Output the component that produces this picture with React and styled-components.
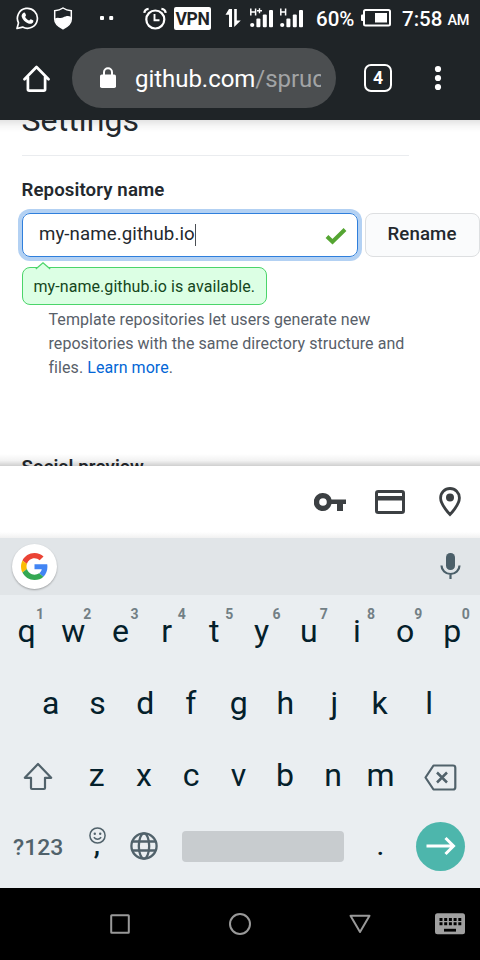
import React from "react";
import styled, { createGlobalStyle } from "styled-components";

const Global = createGlobalStyle`
  * { box-sizing: border-box; }
  html, body { margin: 0; padding: 0; background: #000; }
  body { font-family: Roboto, "Noto Sans", sans-serif; overflow: hidden; }
`;

const Screen = styled.div`
  width: 480px;
  height: 960px;
  display: flex;
  flex-direction: column;
  overflow: hidden;
  background: #fff;
`;

const Icon = styled.svg`
  display: block;
  flex: none;
  width: ${(p) => p.$w}px;
  height: ${(p) => p.$h}px;
  margin-left: ${(p) => p.$ml || 0}px;
  margin-right: ${(p) => p.$mr || 0}px;
  margin-top: ${(p) => p.$mt || 0}px;
`;

/* ---------- Status bar ---------- */
const StatusBar = styled.div`
  height: 36px;
  flex: none;
  display: flex;
  align-items: flex-start;
  background: #1f2427;
  color: #fff;
`;
const StatusText = styled.span`
  flex: none;
  white-space: nowrap;
  font-size: ${(p) => p.$size}px;
  font-weight: 500;
  line-height: 24px;
  letter-spacing: ${(p) => p.$ls || 0}px;
  margin-top: ${(p) => p.$mt}px;
  margin-left: ${(p) => p.$ml}px;
  width: ${(p) => p.$w}px;
`;
const VpnBadge = styled.span`
  flex: none;
  width: 37px;
  height: 23px;
  margin: 7px 0 0 7px;
  border-radius: 2px;
  background: #fff;
  color: #1f2427;
  font-size: 17.5px;
  font-weight: 700;
  line-height: 25px;
  letter-spacing: -0.3px;
  text-align: center;
`;

/* ---------- Browser toolbar ---------- */
const Toolbar = styled.div`
  height: 84px;
  flex: none;
  display: flex;
  align-items: flex-start;
  background: #1f2427;
`;
const AddressPill = styled.div`
  flex: none;
  width: 264px;
  height: 60px;
  margin: 12px 0 0 21px;
  padding-left: 28px;
  border-radius: 30px;
  display: flex;
  align-items: flex-start;
  background: #4b4e50;
`;
const Url = styled.div`
  width: 186px;
  margin: 0 0 0 19px;
  overflow: hidden;
  white-space: nowrap;
  color: #fff;
  font-size: 24px;
  line-height: 63px;
  letter-spacing: -0.04px;
`;
const UrlPath = styled.span`
  color: #a2a4a5;
`;
const TabCount = styled.div`
  flex: none;
  width: 28px;
  height: 28px;
  margin: 28px 0 0 28px;
  border: 2.6px solid #fff;
  border-radius: 7px;
  color: #fff;
  font-size: 17.5px;
  font-weight: 700;
  line-height: 24px;
  text-align: center;
`;

/* ---------- Page ---------- */
const Page = styled.main`
  position: relative;
  flex: none;
  height: 346px;
  padding-left: 21.5px;
  overflow: hidden;
  color: #24292e;
  background: #fff;
`;
const EdgeShadow = styled.div`
  position: absolute;
  left: 0;
  right: 0;
  height: 12px;
  ${(p) => (p.$edge === "top"
    ? "top: 0; background: linear-gradient(rgba(0,0,0,.11), rgba(0,0,0,.03) 55%, rgba(0,0,0,0));"
    : "bottom: 0; background: linear-gradient(rgba(0,0,0,0), rgba(0,0,0,.05) 55%, rgba(0,0,0,.19));")}
`;
const Title = styled.h1`
  width: 387px;
  height: 60px;
  margin: -24px 0 0;
  border-bottom: 1px solid #eaecef;
  font-size: 32px;
  font-weight: 400;
  line-height: 48px;
  letter-spacing: 0.1px;
`;
const Label = styled.h2`
  margin: ${(p) => p.$mt}px 0 0;
  font-size: 18.67px;
  font-weight: 600;
  line-height: 28px;
  letter-spacing: 0.1px;
`;
const FormRow = styled.div`
  display: flex;
  gap: 7px;
  margin-top: 9px;
`;
const NameField = styled.div`
  width: 336.5px;
  height: 44px;
  padding-left: 16.5px;
  display: flex;
  align-items: flex-start;
  border: 1.4px solid #2f7fdc;
  border-radius: 8px;
  box-shadow: 0 0 0 4px #b3d1f3;
  font-size: 18.67px;
  line-height: 40px;
`;
const NameText = styled.span`
  width: 155.5px;
  white-space: nowrap;
  letter-spacing: 0.09px;
`;
const Caret = styled.span`
  width: 1px;
  height: 22px;
  margin-top: 10px;
  background: #4a4f54;
`;
const Rename = styled.button`
  flex: none;
  width: 115px;
  height: 44px;
  padding: 0 1px 2px 0;
  border: 1.4px solid #dddfe1;
  border-radius: 8px;
  background: #fafbfc;
  color: #24292e;
  font: 500 18.67px/38px Roboto, sans-serif;
  letter-spacing: 0.1px;
`;
const Tip = styled.div`
  position: relative;
  width: 245.5px;
  height: 38px;
  margin-top: 10px;
  padding-left: 11px;
  border: 1.3px solid #4bd56a;
  border-radius: 8px;
  background: #dcffe4;
  color: #144620;
  font-size: 16px;
  line-height: 37px;
  letter-spacing: 0.07px;
  white-space: nowrap;
`;
const TipArrow = styled.svg`
  position: absolute;
  left: 12.5px;
  top: -6px;
  width: 16px;
  height: 8px;
`;
const Help = styled.p`
  width: 380px;
  margin: 3px 0 0 27px;
  color: #586069;
  font-size: 16px;
  line-height: 24px;
  letter-spacing: 0.06px;
`;
const Link = styled.a`
  color: #0366d6;
`;

/* ---------- Autofill bar ---------- */
const AutofillBar = styled.div`
  height: 72px;
  flex: none;
  display: flex;
  align-items: flex-start;
  background: linear-gradient(#fff 66px, #f1f1f1 72px);
`;

/* ---------- Keyboard ---------- */
const Suggestions = styled.div`
  height: 57px;
  flex: none;
  display: flex;
  align-items: flex-start;
  justify-content: space-between;
  padding: 6px 19.5px 0 12px;
  background: #e1e5e8;
`;
const GoogleButton = styled.div`
  width: 45px;
  height: 45px;
  border-radius: 50%;
  display: grid;
  place-items: center;
  background: #fff;
  box-shadow: 0 1px 2px rgba(0, 0, 0, 0.3);
`;
const Keyboard = styled.div`
  height: 293px;
  flex: none;
  background: #eaeef1;
  color: #04202b;
`;
const KeyRow = styled.div`
  height: 72px;
  display: flex;
  padding-left: ${(p) => p.$pad}px;
`;
const Key = styled.div`
  position: relative;
  flex: none;
  width: 47.3px;
  padding-right: ${(p) => p.$trim || 0}px;
  font-size: 32px;
  line-height: 72px;
  text-align: center;
`;
const Hint = styled.span`
  position: absolute;
  left: 27px;
  top: 9px;
  width: 20px;
  color: #727f85;
  font-size: 14px;
  font-weight: 700;
  line-height: 20px;
  text-align: center;
`;
const BottomRow = styled.div`
  height: 77px;
  display: flex;
  align-items: flex-start;
`;
const SymbolsKey = styled.div`
  width: 75px;
  padding-left: 13px;
  color: #51626b;
  font-size: 22.9px;
  font-weight: 500;
  line-height: 73px;
`;
const CommaKey = styled.div`
  width: 44px;
  display: flex;
  flex-direction: column;
  align-items: center;
  padding-top: 16px;
  font-size: 28px;
  font-weight: 500;
  line-height: 2px;
`;
const SpaceBar = styled.div`
  width: 162px;
  height: 31px;
  margin: 20px 0 0 24px;
  border-radius: 4px;
  background: #c8cccf;
`;
const PeriodKey = styled.div`
  width: 72.5px;
  font-size: 26px;
  font-weight: 500;
  line-height: 70px;
  text-align: center;
`;
const GoKey = styled.div`
  width: 49px;
  height: 49px;
  margin: 10.5px 0 0 -0.5px;
  border-radius: 50%;
  display: grid;
  place-items: center;
  background: #4db6ac;
`;

/* ---------- Navigation bar ---------- */
const NavBar = styled.nav`
  height: 72px;
  flex: none;
  display: flex;
  align-items: flex-start;
  background: #000;
`;

const Signal = ({ label, ml }) => (
  <Icon $w={24} $h={20} $ml={ml} $mt={8} viewBox="0 0 24 20" fill="#fff">
    <circle cx="2.2" cy="17" r="2.1" />
    <rect x="6.4" y="10.4" width="4" height="8.8" rx="1" />
    <rect x="12.8" y="6.4" width="4" height="12.8" rx="1" />
    <rect x="19" y="2" width="4" height="17.2" rx="1" />
    <path d="M0.8 0.4V7.6M5.6 0.4V7.6M0.8 4H5.6" stroke="#fff" strokeWidth="1.5" />
    {label === "H+" && <path d="M7 2.8h5M9.5 0.3v5" stroke="#fff" strokeWidth="1.4" />}
  </Icon>
);

const digits = "1234567890";
const trims = { w: 1.5, e: 1.5, r: 3.5, t: 3, y: 3, u: 3, i: 1.5, s: 1, f: 3.5, g: 2, h: 3.5, k: 4, b: 1.5 };

export default function App() {
  return (
    <Screen>
      <Global />
      <StatusBar>
        <Icon $w={23} $h={23} $ml={16} $mt={7} viewBox="0 0 23 23" fill="none">
          <path d="M1 21.5l1.5-5.6A10 10 0 1 1 6.6 20.1z" stroke="#fff" strokeWidth="1.7" strokeLinejoin="round" />
          <path d="M7.6 5.8c.7-.5 1.3-.3 1.6.4l.8 1.9c.2.6-.9 1.4-.8 1.9.8 1.7 2.2 2.8 3.9 3.5.6.1 1.2-1.4 1.8-1.2l2.1 1c.6.3.4 1.5 0 2.2-1 1.4-2.9 1.6-4.7.9-3.2-1.2-5.8-3.8-6.6-6.700-.3-1.600.5-3.100 1.900-3.900z" fill="#fff" />
        </Icon>
        <Icon $w={20} $h={23} $ml={14} $mt={7} viewBox="0 0 20 23">
          <path d="M10 1c2.500 1.700 5.500 2.500 8.300 2.700v8.300c0 4.500-4 7.700-8.300 9.700-4.300-2-8.300-5.200-8.300-9.700V3.700C4.500 3.500 7.500 2.700 10 1z" fill="#1f2427" stroke="#fff" strokeWidth="1.5" />
          <path d="M2 11.500c3-2 5 .3 8-1 3-1.400 5.500-2.200 8-.4V12c0 4.500-4 7.700-8 9.600C6 19.700 2 16.500 2 12z" fill="#fff" />
        </Icon>
        <Icon $w={14} $h={4} $ml={27} $mt={16} viewBox="0 0 14 4" fill="#fff">
          <rect width="4" height="4" rx="1" /><rect x="9.2" width="4" height="4" rx="1" />
        </Icon>
        <Icon $w={24} $h={23} $ml={29} $mt={7} viewBox="0 0 24 23" fill="none" stroke="#fff">
          <circle cx="12.3" cy="12.5" r="9" strokeWidth="2.2" />
          <path d="M11.500 7v6.300h5" strokeWidth="1.9" />
          <path d="M1.300 5.800C1.600 3.600 3.200 2 5.600 1.800M22.700 5.800C22.400 3.600 20.800 2 18.400 1.800" strokeWidth="2.3" />
        </Icon>
        <VpnBadge>VPN</VpnBadge>
        <Icon $w={17} $h={20} $ml={14} $mt={8} viewBox="0 0 17 20" fill="#fff">
          <path d="M4 1h3v18H4V6.700H.5z" /><path d="M9.200 1h2.600v11.600h4L9.200 19z" />
        </Icon>
        <Signal label="H+" ml={7.5} />
        <Signal label="H" ml={6} />
        <StatusText $size={20.5} $ml={12.5} $mt={7} $w={43}>60%</StatusText>
        <Icon $w={31} $h={18} $ml={2} $mt={9} viewBox="0 0 31 18">
          <rect x="3" y="1" width="26" height="15.5" rx="1.5" fill="none" stroke="#fff" strokeWidth="2" />
          <rect x="0" y="5.5" width="3" height="6.5" rx="1" fill="#fff" />
          <rect x="14" y="4" width="12" height="9.5" fill="#fff" />
        </Icon>
        <StatusText $size={20.5} $ml={10} $mt={7} $w={45.5}>7:58</StatusText>
        <StatusText $size={14.5} $ml={0} $mt={9} $w={24} $ls={-0.3}>AM</StatusText>
      </StatusBar>

      <Toolbar>
        <Icon $w={28} $h={28} $ml={23} $mt={29} viewBox="0 0 28 28" fill="none" stroke="#fff" strokeWidth="2.7" strokeLinejoin="round" strokeLinecap="round">
          <path d="M1.500 14.200L13.500 2l12 12.200M4.900 12v12.300q0 1.300 1.300 1.300h14.600q1.300 0 1.300-1.300V12" />
        </Icon>
        <AddressPill>
          <Icon $w={16} $h={22} $mt={19} viewBox="0 0 16 22">
            <path d="M4 9V5.200a4 4 0 0 1 8 0V9" fill="none" stroke="#fff" strokeWidth="2" />
            <rect y="7.5" width="16" height="13.5" rx="1.8" fill="#fff" />
          </Icon>
          <Url>github.com<UrlPath>/spruce</UrlPath></Url>
        </AddressPill>
        <TabCount>4</TabCount>
        <Icon $w={8} $h={26} $ml={42} $mt={29} viewBox="0 0 8 26" fill="#fff">
          <circle cx="4" cy="4" r="3.1" /><circle cx="4" cy="13" r="3.1" /><circle cx="4" cy="22" r="3.1" />
        </Icon>
      </Toolbar>

      <Page>
        <Title>Settings</Title>
        <Label $mt={20}>Repository name</Label>
        <FormRow>
          <NameField>
            <NameText>my-name.github.io</NameText>
            <Caret />
            <Icon $w={22} $h={18} $ml={129} $mt={13} viewBox="0 0 22 18" fill="none">
              <path d="M2 9.500l5.500 5.200L20 2.500" stroke="#55a532" strokeWidth="4" />
            </Icon>
          </NameField>
          <Rename>Rename</Rename>
        </FormRow>
        <Tip>
          <TipArrow viewBox="0 0 16 8">
            <path d="M0 8L8 .8 16 8z" fill="#dcffe4" />
            <path d="M.8 7L8 .8 15.200 7" fill="none" stroke="#4bd56a" strokeWidth="1.2" />
          </TipArrow>
          my-name.github.io is available.
        </Tip>
        <Help>
          Template repositories let users generate new<br />
          repositories with the same directory structure and<br />
          files. <Link>Learn more</Link>.
        </Help>
        <Label $mt={73}>Social preview</Label>
        <EdgeShadow $edge="top" />
        <EdgeShadow $edge="bottom" />
      </Page>

      <AutofillBar>
        <Icon $w={32} $h={19} $ml={314} $mt={27} viewBox="0 0 32 19" fill="#3c4043">
          <path fillRule="evenodd" d="M9 0a9 9 0 0 1 8.500 6.500H32v4.500h-3V18h-6v-7h-5.500A9 9 0 1 1 9 0zM9 5.200a3.800 3.800 0 1 0 0 7.600 3.800 3.800 0 0 0 0-7.600z" />
        </Icon>
        <Icon $w={30} $h={24} $ml={29} $mt={24} viewBox="0 0 30 24">
          <rect x="1.5" y="1.5" width="27" height="21" rx="1.8" fill="none" stroke="#3c4043" strokeWidth="3" />
          <rect x="1" y="6" width="28" height="4.5" fill="#3c4043" />
        </Icon>
        <Icon $w={22} $h={30} $ml={34} $mt={21} viewBox="0 0 22 30">
          <path d="M11 1.500A9.400 9.400 0 0 0 1.600 11C1.600 18 11 27.500 11 27.500S20.400 18 20.400 11A9.400 9.400 0 0 0 11 1.500z" fill="none" stroke="#3c4043" strokeWidth="2.8" />
          <circle cx="11" cy="10.5" r="4" fill="#3c4043" />
        </Icon>
      </AutofillBar>

      <Suggestions>
        <GoogleButton>
          <Icon $w={27} $h={27} viewBox="0 0 48 48">
            <path fill="#EA4335" d="M24 9.500c3.540 0 6.710 1.220 9.210 3.600l6.850-6.850C35.900 2.380 30.470 0 24 0 14.620 0 6.510 5.380 2.560 13.220l7.980 6.190C12.430 13.720 17.740 9.500 24 9.500z" />
            <path fill="#4285F4" d="M46.980 24.550c0-1.570-.15-3.090-.38-4.550H24v9.020h12.940c-.58 2.960-2.260 5.480-4.780 7.180l7.730 6c4.510-4.180 7.090-10.360 7.090-17.650z" />
            <path fill="#FBBC05" d="M10.530 28.590c-.48-1.450-.76-2.990-.76-4.590s.27-3.140.76-4.590l-7.980-6.190C.92 16.460 0 20.120 0 24c0 3.880.92 7.540 2.560 10.780l7.970-6.190z" />
            <path fill="#34A853" d="M24 48c6.480 0 11.930-2.130 15.890-5.810l-7.730-6c-2.150 1.450-4.920 2.300-8.160 2.300-6.260 0-11.570-4.220-13.470-9.910l-7.980 6.190C6.510 42.620 14.620 48 24 48z" />
          </Icon>
        </GoogleButton>
        <Icon $w={21} $h={28} $mt={8} viewBox="0 0 21 28">
          <rect x="6" y="1" width="9" height="17" rx="4.3" fill="#4b5f69" />
          <path d="M1.500 13.500a9 8.500 0 0 0 18 0M10.500 22v5" fill="none" stroke="#4b5f69" strokeWidth="2.2" />
        </Icon>
      </Suggestions>

      <Keyboard>
        <KeyRow $pad={3}>
          {[..."qwertyuiop"].map((c, i) => (
            <Key key={c} $trim={trims[c]}>{c}<Hint>{digits[i]}</Hint></Key>
          ))}
        </KeyRow>
        <KeyRow $pad={27}>
          {[..."asdfghjkl"].map((c) => <Key key={c} $trim={trims[c]}>{c}</Key>)}
        </KeyRow>
        <KeyRow $pad={23}>
          <Icon $w={30} $h={29} $mr={20} $mt={22.5} viewBox="0 0 30 29" fill="none" stroke="#51626b" strokeWidth="2.2" strokeLinejoin="round">
            <path d="M15 2L1.800 15.800H8V26q0 1 1 1h12q1 0 1-1V15.800h6.200z" />
          </Icon>
          {[..."zxcvbnm"].map((c) => <Key key={c} $trim={trims[c]}>{c}</Key>)}
          <Icon $w={33} $h={27} $ml={20} $mt={25} viewBox="0 0 33 27" fill="none" stroke="#51626b" strokeWidth="2.2" strokeLinejoin="round">
            <path d="M9.500 1.500H29q2.300 0 2.300 2.300v19.400q0 2.300-2.300 2.300H9.500L1.500 13.500z" />
            <path d="M13 8.500l10 10M23 8.500l-10 10" strokeWidth="2.5" />
          </Icon>
        </KeyRow>
        <BottomRow>
          <SymbolsKey>?123</SymbolsKey>
          <CommaKey>
            <Icon $w={17} $h={17} viewBox="0 0 17 17" fill="none" stroke="#51626b" strokeWidth="1.5">
              <circle cx="8.5" cy="8.5" r="7.6" />
              <path d="M4.800 10.300q3.700 4 7.400 0" />
              <circle cx="5.8" cy="6.7" r="1.2" fill="#51626b" stroke="none" />
              <circle cx="11.2" cy="6.7" r="1.2" fill="#51626b" stroke="none" />
            </Icon>
            ,
          </CommaKey>
          <Icon $w={28} $h={28} $ml={11} $mt={21} viewBox="0 0 28 28" fill="none" stroke="#51626b" strokeWidth="2.3">
            <circle cx="14" cy="14" r="12.6" />
            <ellipse cx="14" cy="14" rx="5.2" ry="12.6" />
            <path d="M2.500 9.500h23M2.500 18.500h23" />
          </Icon>
          <SpaceBar />
          <PeriodKey>.</PeriodKey>
          <GoKey>
            <Icon $w={30} $h={20} viewBox="0 0 30 20" fill="none" stroke="#fff" strokeWidth="3">
              <path d="M.5 10H27M19.500 2l8 8-8 8" />
            </Icon>
          </GoKey>
        </BottomRow>
      </Keyboard>

      <NavBar>
        <Icon $w={20} $h={20} $ml={110} $mt={26} viewBox="0 0 20 20">
          <rect x="1.2" y="1.2" width="17.6" height="17.6" rx=".5" fill="none" stroke="#999" strokeWidth="2" />
        </Icon>
        <Icon $w={22} $h={22} $ml={99} $mt={25} viewBox="0 0 22 22">
          <circle cx="11" cy="11" r="10" fill="none" stroke="#999" strokeWidth="2" />
        </Icon>
        <Icon $w={22} $h={20} $ml={98} $mt={26} viewBox="0 0 22 20">
          <path d="M1.500 1.800h19L11 18z" fill="none" stroke="#999" strokeWidth="2" strokeLinejoin="round" />
        </Icon>
        <Icon $w={30} $h={22} $ml={64} $mt={25} viewBox="0 0 30 22">
          <rect y=".3" width="30" height="21" rx="2.5" fill="#a0a0a0" />
          <path d="M4.500 6.500h22M4.500 10.800h22" stroke="#000" strokeWidth="3" strokeDasharray="3 1.700" />
          <path d="M9 17.200h12" stroke="#000" strokeWidth="2.8" />
        </Icon>
      </NavBar>
    </Screen>
  );
}
